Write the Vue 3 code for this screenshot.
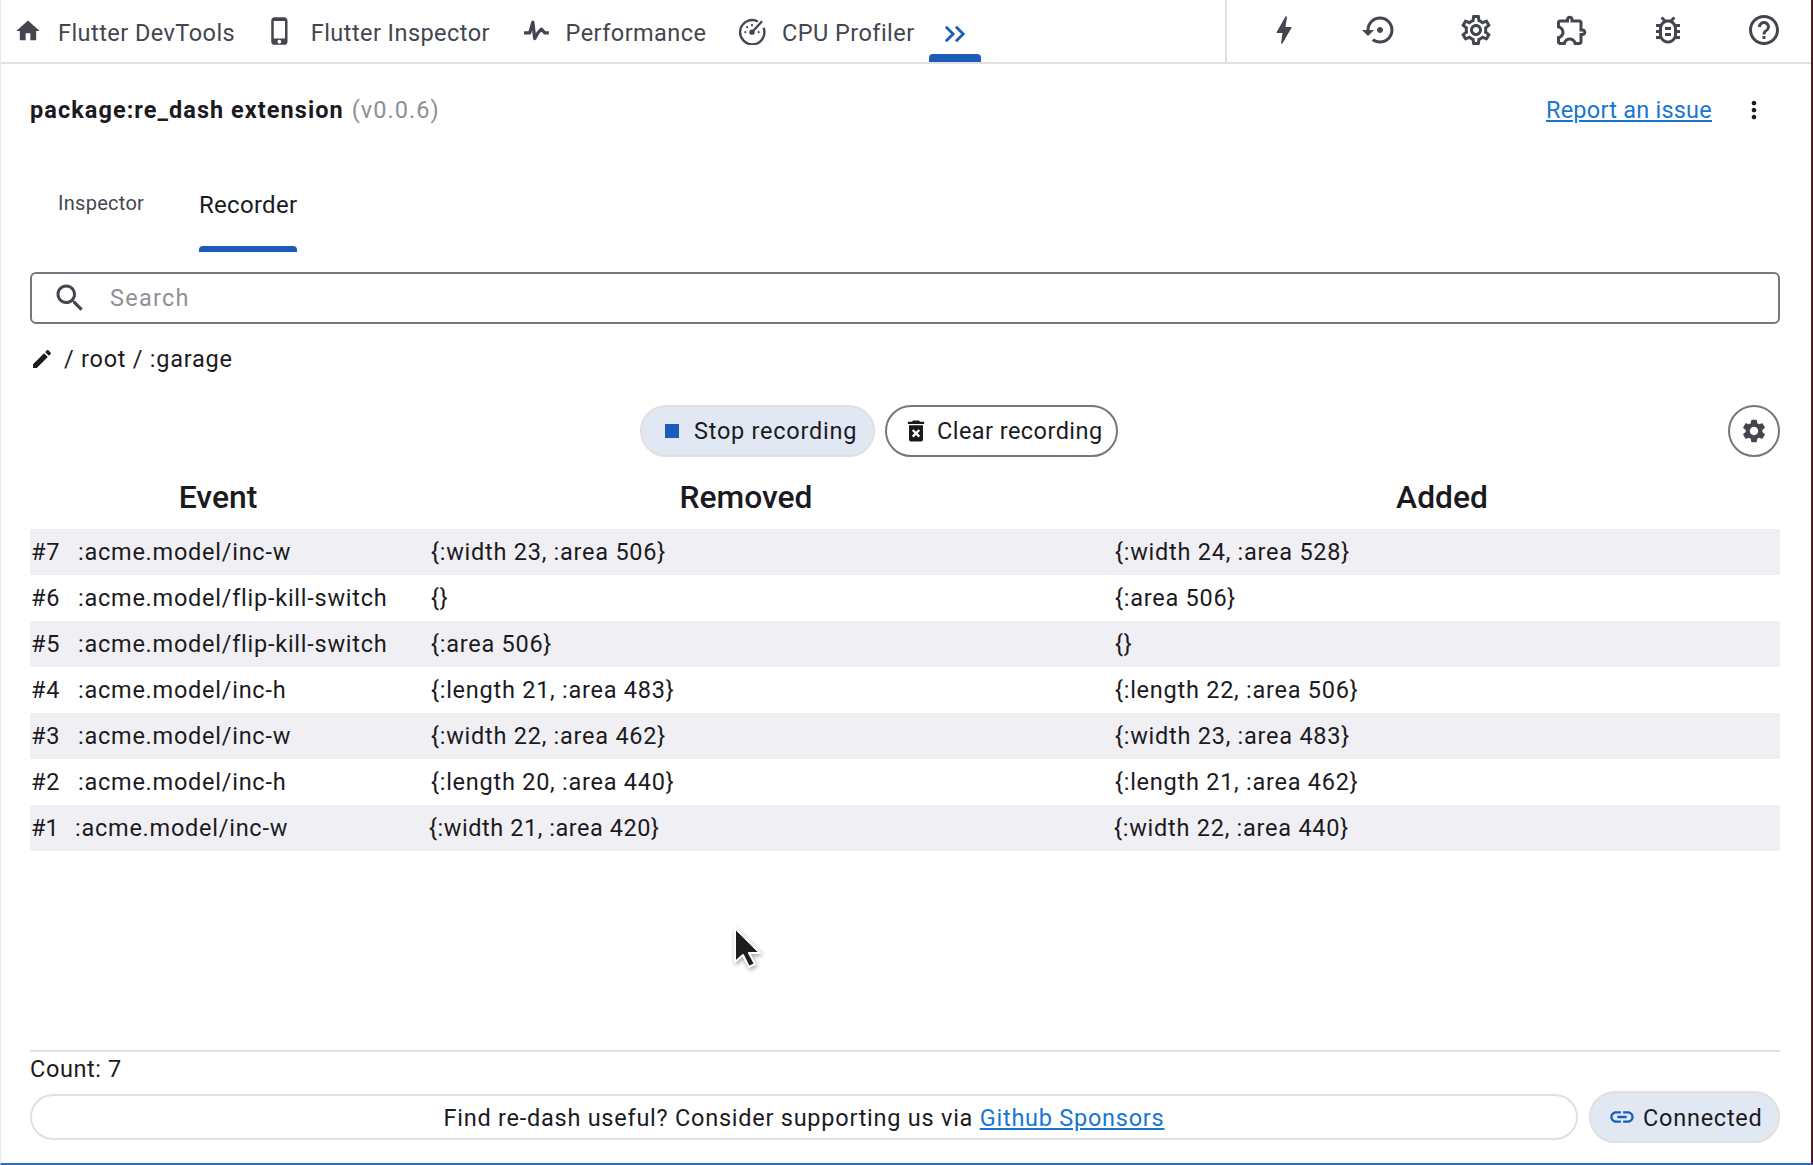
<script setup>
const icons = {
  home: 'M10 20v-6h4v6h5v-8h3L12 3 2 12h3v8z',
  phone: 'M15.5 1h-8C6.12 1 5 2.12 5 3.5v17C5 21.88 6.12 23 7.5 23h8c1.38 0 2.5-1.12 2.5-2.5v-17C18 2.12 16.88 1 15.5 1zm-4 21c-.83 0-1.5-.67-1.5-1.5s.67-1.5 1.5-1.5 1.5.67 1.5 1.5-.67 1.5-1.5 1.5zm4.5-4H7V4h9v14z',
  bolt: 'M11 21h-1l1-7H7.5c-.88 0-.33-.75-.31-.78C8.48 10.94 10.42 7.54 13.01 3h1l-1 7h3.51c.4 0 .62.19.4.66C12.97 17.55 11 21 11 21z',
  restore: 'M14 12c0-1.1-.9-2-2-2s-2 .9-2 2 .9 2 2 2 2-.9 2-2zm-2-9c-4.97 0-9 4.03-9 9H0l4 4 4-4H5c0-3.87 3.13-7 7-7s7 3.13 7 7-3.13 7-7 7c-1.51 0-2.91-.49-4.06-1.3l-1.42 1.44C8.04 20.3 9.94 21 12 21c4.97 0 9-4.03 9-9s-4.03-9-9-9z',
  gear: 'M19.43 12.98c.04-.32.07-.64.07-.98 0-.34-.03-.66-.07-.98l2.11-1.65c.19-.15.24-.42.12-.64l-2-3.46c-.09-.16-.26-.25-.44-.25-.06 0-.12.01-.17.03l-2.49 1c-.52-.4-1.08-.73-1.69-.98l-.38-2.65C14.46 2.18 14.25 2 14 2h-4c-.25 0-.46.18-.49.42l-.38 2.65c-.61.25-1.17.59-1.69.98l-2.49-1c-.06-.02-.12-.03-.18-.03-.17 0-.34.09-.43.25l-2 3.46c-.13.22-.07.49.12.64l2.11 1.65c-.04.32-.07.65-.07.98 0 .33.03.66.07.98l-2.11 1.65c-.19.15-.24.42-.12.64l2 3.46c.09.16.26.25.44.25.06 0 .12-.01.17-.03l2.49-1c.52.4 1.08.73 1.69.98l.38 2.65c.03.24.24.42.49.42h4c.25 0 .46-.18.49-.42l.38-2.65c.61-.25 1.17-.59 1.69-.98l2.49 1c.06.02.12.03.18.03.17 0 .34-.09.43-.25l2-3.46c.12-.22.07-.49-.12-.64l-2.11-1.65zm-1.98-1.71c.04.31.05.52.05.73 0 .21-.02.43-.05.73l-.14 1.13.89.7 1.08.84-.7 1.21-1.27-.51-1.04-.42-.9.68c-.43.32-.84.56-1.25.73l-1.06.43-.16 1.13-.2 1.35h-1.4l-.19-1.35-.16-1.13-1.06-.43c-.43-.18-.83-.41-1.23-.71l-.91-.7-1.06.43-1.27.51-.7-1.21 1.08-.84.89-.7-.14-1.13c-.03-.31-.05-.54-.05-.74s.02-.43.05-.73l.14-1.13-.89-.7-1.08-.84.7-1.21 1.27.51 1.04.42.9-.68c.43-.32.84-.56 1.25-.73l1.06-.43.16-1.13.2-1.35h1.39l.19 1.35.16 1.13 1.06.43c.43.18.83.41 1.23.71l.91.7 1.06-.43 1.27-.51.7 1.21-1.07.85-.89.7.14 1.13zM12 8c-2.21 0-4 1.79-4 4s1.79 4 4 4 4-1.79 4-4-1.79-4-4-4zm0 6c-1.1 0-2-.9-2-2s.9-2 2-2 2 .9 2 2-.9 2-2 2z',
  puzzle: 'M10.5 4.5c.28 0 .5.22.5.5v2h6v6h2c.28 0 .5.22.5.5s-.22.5-.5.5h-2v6h-2.12c-.68-1.75-2.39-3-4.38-3s-3.7 1.25-4.38 3H4v-2.12c1.75-.68 3-2.39 3-4.38 0-1.99-1.24-3.7-2.99-4.38L4 7h6V5c0-.28.22-.5.5-.5m0-2C9.12 2.5 8 3.62 8 5H4c-1.1 0-1.99.9-1.99 2v3.8h.29c1.49 0 2.7 1.21 2.7 2.7s-1.21 2.7-2.7 2.7H2V20c0 1.1.9 2 2 2h3.8v-.3c0-1.49 1.21-2.7 2.7-2.7s2.7 1.21 2.7 2.7v.3H17c1.1 0 2-.9 2-2v-4c1.38 0 2.5-1.12 2.5-2.5S20.38 11 19 11V7c0-1.1-.9-2-2-2h-4c0-1.38-1.12-2.5-2.5-2.5z',
  bug: 'M20 8h-2.81c-.45-.78-1.07-1.45-1.82-1.96L17 4.41 15.59 3l-2.17 2.17C12.96 5.06 12.49 5 12 5c-.49 0-.96.06-1.41.17L8.41 3 7 4.41l1.62 1.63C7.88 6.55 7.26 7.22 6.81 8H4v2h2.09c-.05.33-.09.66-.09 1v1H4v2h2v1c0 .34.04.67.09 1H4v2h2.81c1.04 1.79 2.97 3 5.19 3s4.15-1.21 5.19-3H20v-2h-2.09c.05-.33.09-.66.09-1v-1h2v-2h-2v-1c0-.34-.04-.67-.09-1H20V8zm-4 7c0 2.21-1.79 4-4 4s-4-1.79-4-4v-4c0-2.21 1.79-4 4-4s4 1.79 4 4v4zm-6-1h4v2h-4zm0-4h4v2h-4z',
  help: 'M11 18h2v-2h-2v2zm1-16C6.48 2 2 6.48 2 12s4.48 10 10 10 10-4.48 10-10S17.52 2 12 2zm0 18c-4.41 0-8-3.59-8-8s3.59-8 8-8 8 3.59 8 8-3.59 8-8 8zm0-14c-2.21 0-4 1.79-4 4h2c0-1.1.9-2 2-2s2 .9 2 2c0 2-3 1.75-3 5h2c0-2.25 3-2.5 3-5 0-2.21-1.79-4-4-4z',
  more: 'M12 8c1.1 0 2-.9 2-2s-.9-2-2-2-2 .9-2 2 .9 2 2 2zm0 2c-1.1 0-2 .9-2 2s.9 2 2 2 2-.9 2-2-.9-2-2-2zm0 6c-1.1 0-2 .9-2 2s.9 2 2 2 2-.9 2-2-.9-2-2-2z',
  search: 'M15.5 14h-.79l-.28-.27C15.41 12.59 16 11.11 16 9.5 16 5.91 13.09 3 9.5 3S3 5.91 3 9.5 5.91 16 9.5 16c1.61 0 3.09-.59 4.23-1.57l.27.28v.79l5 4.99L20.49 19l-4.99-5zm-6 0C7.01 14 5 11.99 5 9.5S7.01 5 9.5 5 14 7.01 14 9.5 11.99 14 9.5 14z',
  edit: 'M3 17.25V21h3.75L17.81 9.94l-3.75-3.75L3 17.25zM20.71 7.04c.39-.39.39-1.02 0-1.41l-2.34-2.34c-.39-.39-1.02-.39-1.41 0l-1.83 1.83 3.75 3.75 1.83-1.83z',
  trash: 'M6 19c0 1.1.9 2 2 2h8c1.1 0 2-.9 2-2V7H6v12zm2.46-7.12l1.41-1.41L12 12.59l2.12-2.12 1.41 1.41L13.41 14l2.12 2.12-1.41 1.41L12 15.41l-2.12 2.12-1.41-1.41L10.59 14l-2.13-2.12zM15.5 4l-1-1h-5l-1 1H5v2h14V4z',
  gearFill: 'M19.14 12.94c.04-.3.06-.61.06-.94 0-.32-.02-.64-.07-.94l2.03-1.58c.18-.14.23-.41.12-.61l-1.92-3.32c-.12-.22-.37-.29-.59-.22l-2.39.96c-.5-.38-1.03-.7-1.62-.94l-.36-2.54c-.04-.24-.24-.41-.48-.41h-3.84c-.24 0-.43.17-.47.41l-.36 2.54c-.59.24-1.13.57-1.62.94l-2.39-.96c-.22-.08-.47 0-.59.22L2.74 8.87c-.12.21-.08.47.12.61l2.03 1.58c-.05.3-.09.63-.09.94s.02.64.07.94l-2.03 1.58c-.18.14-.23.41-.12.61l1.92 3.32c.12.22.37.29.59.22l2.39-.96c.5.38 1.03.7 1.62.94l.36 2.54c.05.24.24.41.48.41h3.84c.24 0 .44-.17.47-.41l.36-2.54c.59-.24 1.13-.56 1.62-.94l2.39.96c.22.08.47 0 .59-.22l1.92-3.32c.12-.22.07-.47-.12-.61l-2.01-1.58zM12 15.6c-1.98 0-3.6-1.62-3.6-3.6s1.62-3.6 3.6-3.6 3.6 1.62 3.6 3.6-1.62 3.6-3.6 3.6z',
  link: 'M3.9 12c0-1.71 1.39-3.1 3.1-3.1h4V7H7c-2.76 0-5 2.24-5 5s2.24 5 5 5h4v-1.9H7c-1.71 0-3.1-1.39-3.1-3.1zM8 13h8v-2H8v2zm9-6h-4v1.9h4c1.71 0 3.1 1.39 3.1 3.1s-1.39 3.1-3.1 3.1h-4V17h4c2.76 0 5-2.24 5-5s-2.24-5-5-5z'
}
const rightIcons = ['bolt', 'restore', 'gear', 'puzzle', 'bug', 'help']
const rows = [
  { id: '#7', event: ':acme.model/inc-w', removed: '{:width 23, :area 506}', added: '{:width 24, :area 528}' },
  { id: '#6', event: ':acme.model/flip-kill-switch', removed: '{}', added: '{:area 506}' },
  { id: '#5', event: ':acme.model/flip-kill-switch', removed: '{:area 506}', added: '{}' },
  { id: '#4', event: ':acme.model/inc-h', removed: '{:length 21, :area 483}', added: '{:length 22, :area 506}' },
  { id: '#3', event: ':acme.model/inc-w', removed: '{:width 22, :area 462}', added: '{:width 23, :area 483}' },
  { id: '#2', event: ':acme.model/inc-h', removed: '{:length 20, :area 440}', added: '{:length 21, :area 462}' },
  { id: '#1', event: ':acme.model/inc-w', removed: '{:width 21, :area 420}', added: '{:width 22, :area 440}', narrow: true }
]
</script>

<template>
  <div class="page">
    <header class="topbar">
      <nav class="tabs">
        <div class="tab first"><svg class="ic28" viewBox="0 0 24 24"><path :d="icons.home" /></svg><span>Flutter DevTools</span></div>
        <div class="tab"><svg class="ic30" viewBox="0 0 24 24"><path :d="icons.phone" /></svg><span>Flutter Inspector</span></div>
        <div class="tab">
          <svg class="ic28 line" viewBox="0 0 24 24" stroke-width="2.8" stroke-linejoin="round">
            <path d="M1.7 13.7H6.6L9.3 4.5 10.9 18.5 13.6 13.7 16.6 10.4 19.6 13.7H23" />
          </svg>
          <span>Performance</span>
        </div>
        <div class="tab">
          <svg class="ic28 line" viewBox="0 0 24 24" stroke-width="2">
            <path d="M17 3.8A10.4 10.4 0 1 0 21.9 9.2" />
            <path d="M12 13 20.6 3.6" stroke-width="2" />
            <circle class="dot" cx="12" cy="13" r="2.3" />
            <circle class="dot" cx="6.3" cy="13" r=".9" />
            <circle class="dot" cx="7.8" cy="8.7" r=".9" />
            <circle class="dot" cx="12" cy="7" r=".9" />
            <circle class="dot" cx="17.7" cy="13" r=".9" />
          </svg>
          <span>CPU Profiler</span>
        </div>
        <div class="more-tab">
          <svg class="chev" viewBox="0 0 24 24" stroke-width="3"><path d="M2 4l8 8-8 8M13 4l8 8-8 8" /></svg>
          <i class="ind-small"></i>
        </div>
      </nav>
      <div class="actions">
        <div v-for="n in rightIcons" :key="n" class="action">
          <svg class="ic36" viewBox="0 0 24 24"><path :d="icons[n]" /></svg>
        </div>
      </div>
    </header>

    <main class="main">
      <div class="title-row">
        <div class="title"><b>package:re_dash extension</b> <span class="ver">(v0.0.6)</span></div>
        <a class="report">Report an issue</a>
        <svg class="more" viewBox="0 0 24 24"><path :d="icons.more" /></svg>
      </div>

      <div class="subtabs">
        <div class="sub inactive">Inspector</div>
        <div class="sub active">Recorder<i class="ind"></i></div>
      </div>

      <div class="search">
        <svg class="ic36" viewBox="0 0 24 24"><path :d="icons.search" /></svg>
        <span>Search</span>
      </div>

      <div class="crumb">
        <svg class="edit" viewBox="0 0 24 24"><path :d="icons.edit" /></svg>
        <span>/ root / :garage</span>
      </div>

      <div class="controls">
        <div class="btn filled"><i class="square"></i><span>Stop recording</span></div>
        <div class="btn outlined"><svg class="trash" viewBox="0 0 24 24"><path :d="icons.trash" /></svg><span>Clear recording</span></div>
        <div class="round"><svg class="gear-s" viewBox="0 0 24 24"><path :d="icons.gearFill" /></svg></div>
      </div>

      <div class="thead">
        <div>Event</div>
        <div>Removed</div>
        <div class="th3">Added</div>
      </div>

      <div class="tbody">
        <div v-for="r in rows" :key="r.id" class="row" :class="{ narrow: r.narrow }">
          <div class="c1"><span class="rid">{{ r.id }}</span><span>{{ r.event }}</span></div>
          <div class="c2">{{ r.removed }}</div>
          <div class="c3">{{ r.added }}</div>
        </div>
      </div>

      <div class="footer">
        <div class="count">Count: 7</div>
        <div class="foot-row">
          <div class="banner">Find re-dash useful? Consider supporting us via&nbsp;<a>Github Sponsors</a></div>
          <div class="conn"><svg class="link" viewBox="0 0 24 24"><path :d="icons.link" /></svg><span>Connected</span></div>
        </div>
      </div>
    </main>

    <svg class="cursor" viewBox="0 0 30 44" width="30" height="44">
      <path d="M3 2 L3 36 L11 29 L17 41 L23 38 L17 27 L28 27 Z" fill="#1d1d1d" stroke="#fff" stroke-width="2" stroke-linejoin="round" />
    </svg>
  </div>
</template>

<style>
html, body { margin: 0; background: #fff; }
</style>

<style scoped>
.page {
  position: relative;
  box-sizing: border-box;
  width: 1813px;
  height: 1165px;
  overflow: hidden;
  display: flex;
  flex-direction: column;
  background: #fff;
  color: #1b1b1f;
  font-family: Roboto, "Liberation Sans", sans-serif;
  font-size: 23.5px;
  letter-spacing: .75px;
  border-left: 1px solid #e8e8e8;
  border-right: 2px solid #4a1c28;
  border-bottom: 2px solid #2f6dbd;
}
svg { display: block; flex: none; fill: #44464f; }
.ic28 { width: 28px; height: 28px; }
.ic30 { width: 30px; height: 30px; }
.ic36 { width: 36px; height: 36px; }
svg.line { fill: none; stroke: #44464f; }
svg.line .dot { fill: #44464f; stroke: none; }

.topbar {
  flex: none;
  display: flex;
  justify-content: space-between;
  height: 62px;
  border-bottom: 2px solid #e0e0e0;
  box-sizing: content-box;
}
.tabs { display: flex; align-items: center; padding-left: 13px; gap: 31.6px; color: #44464f; letter-spacing: .45px; }
.tab { display: flex; align-items: center; gap: 16px; }
.tab.first { margin-right: -2px; }
.tab span { position: relative; top: 2px; }
.more-tab {
  width: 52px;
  height: 62px;
  margin-left: -17px;
  display: flex;
  flex-direction: column;
  align-items: center;
  justify-content: flex-end;
}
svg.chev { width: 22px; height: 22px; margin-bottom: 9px; fill: none; stroke: #1a5cb8; }
.ind-small { width: 52px; height: 8px; background: #1a5cb8; border-radius: 4px 4px 0 0; }
.actions {
  display: flex;
  border-left: 2px solid #e0e0e0;
  padding-left: 9px;
  margin-right: -1px;
}
.action { width: 96px; height: 60px; display: flex; align-items: center; justify-content: center; }

.main {
  flex: 1;
  min-height: 0;
  display: flex;
  flex-direction: column;
  padding: 0 31px 0 29px;
}
.title-row { flex: none; display: flex; align-items: center; height: 92px; }
.title { flex: 1; letter-spacing: 1.05px; }
.title b { font-weight: 700; }
.ver { color: #8f9096; margin-left: 1px; }
.report { color: #1976d2; text-decoration: underline; letter-spacing: .23px; }
.more { width: 28px; height: 28px; margin-left: 28px; margin-right: 12px; fill: #1b1b1f; }

.subtabs { flex: none; display: flex; height: 96px; margin-left: 28px; letter-spacing: .28px; }
.sub { display: flex; flex-direction: column; }
.inactive { color: #44464f; font-size: 20px; padding-top: 35px; width: 141px; }
.active { font-size: 24px; padding-top: 34.5px; position: relative; }
.ind {
  position: absolute;
  left: 0;
  right: 0;
  bottom: 0;
  height: 6px;
  background: #1a5cb8;
  border-radius: 4px 4px 0 0;
}

.search {
  flex: none;
  box-sizing: border-box;
  height: 52px;
  margin-top: 20px;
  border: 2px solid #74777f;
  border-radius: 6px;
  display: flex;
  align-items: center;
  padding-left: 20px;
  gap: 22px;
  color: #8f9096;
}
.search span { letter-spacing: 1.25px; }

.crumb { flex: none; display: flex; align-items: center; height: 69px; gap: 10px; }
.edit { width: 24px; height: 24px; fill: #1b1b1f; margin-left: 0; }

.controls {
  flex: none;
  position: relative;
  display: flex;
  justify-content: center;
  gap: 10px;
  height: 52px;
  margin-top: 12px;
  padding-right: 52px;
  letter-spacing: .45px;
}
.btn {
  box-sizing: border-box;
  height: 52px;
  border-radius: 26px;
  display: flex;
  align-items: center;
}
.filled { width: 235px; background: #e1e8f4; border: 2px solid #e0e0e0; padding-left: 23px; gap: 15px; letter-spacing: .75px; }
.square { width: 14px; height: 14px; background: #1a5cb8; flex: none; }
.outlined { width: 233px; border: 2px solid #74777f; padding-left: 15px; gap: 7px; }
.trash { width: 28px; height: 28px; fill: #1b1b1f; }
.round {
  position: absolute;
  right: 0;
  top: 0;
  box-sizing: border-box;
  width: 52px;
  height: 52px;
  border: 2px solid #74777f;
  border-radius: 50%;
  display: flex;
  align-items: center;
  justify-content: center;
}
.gear-s { width: 28px; height: 28px; }

.thead {
  flex: none;
  box-sizing: border-box;
  display: grid;
  grid-template-columns: 376px 680px 1fr;
  height: 72px;
  padding-top: 8px;
  align-items: center;
  text-align: center;
  font-size: 31.8px;
  font-weight: 500;
  letter-spacing: 0;
}
.th3 { padding-left: 18px; }

.tbody { flex: 1; min-height: 0; }
.row {
  display: grid;
  grid-template-columns: 401px 684px 1fr;
  height: 46px;
  align-items: center;
}
.row:nth-child(odd) { background: #f0eff4; }
.c1 { display: flex; }
.rid { width: 48px; padding-left: 1px; box-sizing: border-box; }
.narrow .rid { width: 45px; letter-spacing: 0; }
.narrow .c2 { margin-left: -2px; letter-spacing: .55px; }
.narrow .c3 { margin-left: -1px; }

.footer { flex: none; }
.count { border-top: 2px solid #e0e0e0; height: 41px; box-sizing: border-box; padding-top: 3px; letter-spacing: .6px; }
.foot-row { display: flex; align-items: center; gap: 11px; height: 52px; margin-bottom: 20px; }
.banner {
  flex: 1;
  box-sizing: border-box;
  height: 46px;
  padding-top: 2px;
  border: 2px solid #e0e0e0;
  border-radius: 23px;
  display: flex;
  align-items: center;
  justify-content: center;
}
.banner a, .banner a:visited { color: #1976d2; text-decoration: underline; }
.conn {
  flex: none;
  box-sizing: border-box;
  width: 191px;
  height: 52px;
  border-radius: 26px;
  background: #e1e8f4;
  border: 2px solid #e0e0e0;
  display: flex;
  align-items: center;
  padding-left: 17px;
  gap: 7px;
}
.conn span { position: relative; top: 1px; }
.link { width: 28px; height: 28px; fill: #1a5cb8; }

.cursor { position: absolute; left: 731px; top: 926px; filter: drop-shadow(1px 2px 2px rgba(0,0,0,.35)); }
</style>
